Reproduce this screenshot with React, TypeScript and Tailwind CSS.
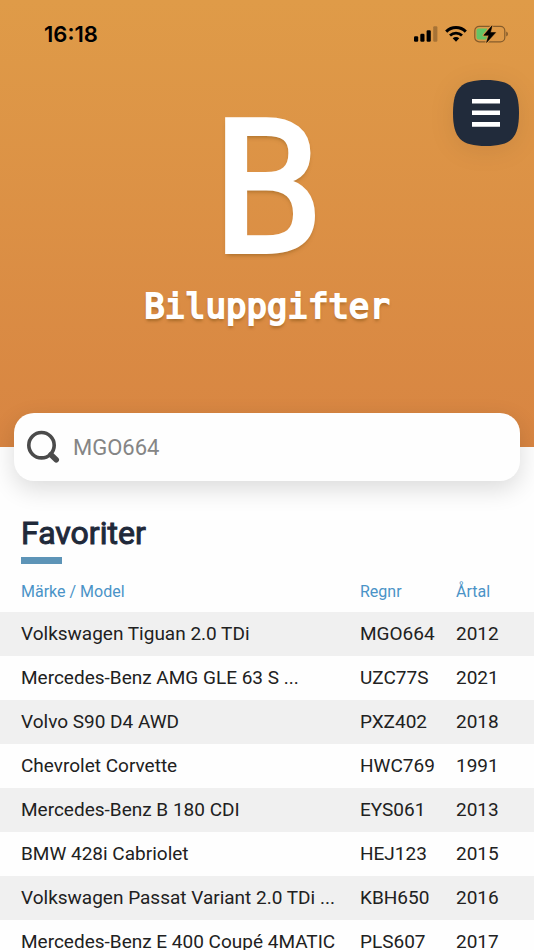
import React from "react";

type Car = { model: string; plate: string; year: number };

const cars: Car[] = [
  { model: "Volkswagen Tiguan 2.0 TDi", plate: "MGO664", year: 2012 },
  { model: "Mercedes-Benz AMG GLE 63 S ...", plate: "UZC77S", year: 2021 },
  { model: "Volvo S90 D4 AWD", plate: "PXZ402", year: 2018 },
  { model: "Chevrolet Corvette", plate: "HWC769", year: 1991 },
  { model: "Mercedes-Benz B 180 CDI", plate: "EYS061", year: 2013 },
  { model: "BMW 428i Cabriolet", plate: "HEJ123", year: 2015 },
  { model: "Volkswagen Passat Variant 2.0 TDi ...", plate: "KBH650", year: 2016 },
  { model: "Mercedes-Benz E 400 Coupé 4MATIC", plate: "PLS607", year: 2017 },
];

function SignalIcon() {
  return (
    <svg width="24" height="16" viewBox="0 0 24 16" aria-hidden="true">
      <rect x="0" y="10.3" width="4.2" height="5.5" rx="1.2" />
      <rect x="6.3" y="7.8" width="4.2" height="8" rx="1.2" />
      <rect x="12.6" y="4.2" width="4.2" height="11.6" rx="1.2" />
      <rect x="19.2" y="0.2" width="4.2" height="15.6" rx="1.2" opacity="0.25" />
    </svg>
  );
}

function WifiIcon() {
  return (
    <svg width="22" height="16" viewBox="0 0 22 16" fill="none" aria-hidden="true">
      <path d="M1.2 5.6C6.7 0.2 15.3 0.2 20.8 5.6" stroke="#000" strokeWidth="3" />
      <path d="M5 9.5c3.4-3.2 8.6-3.2 12 0" stroke="#000" strokeWidth="2.8" />
      <path d="M7.7 12.3c1.9-1.7 4.7-1.7 6.6 0L11 15.8z" fill="#000" />
    </svg>
  );
}

function BatteryIcon() {
  return (
    <svg width="34" height="18" viewBox="0 0 34 18" aria-hidden="true">
      <rect x="0.8" y="1.4" width="30" height="15.4" rx="4.4" fill="none" stroke="#000" strokeOpacity="0.4" strokeWidth="1.2" />
      <path d="M32.3 6.5c2 .8 2 4.2 0 5z" fill="#000" fillOpacity="0.45" />
      <path d="M4.5 3.6H13v11H4.5c-1.1 0-2-.9-2-2v-7c0-1.1.9-2 2-2z" fill="#63c466" />
      <path d="M18 .8 9.8 10.3h5L12.6 17.4 21.6 7.6h-5.2z" fill="#000" stroke="#dd9847" strokeWidth="2.6" strokeLinejoin="round" />
      <path d="M18 .8 9.8 10.3h5L12.6 17.4 21.6 7.6h-5.2z" fill="#000" stroke="#000" strokeWidth="0.6" strokeLinejoin="round" />
    </svg>
  );
}

function MenuButton() {
  return (
    <button type="button" aria-label="Meny" className="absolute top-20 right-[15px] drop-shadow-[0_4px_12px_rgba(0,0,0,0.08)]">
      <svg width="66" height="66" viewBox="0 0 66 66" aria-hidden="true">
        <path d="M33 0C58 0 66 8 66 33S58 66 33 66 0 58 0 33 8 0 33 0z" fill="#212b3b" />
        <path d="M19 21.2h28M19 32.8h28M19 44.4h28" stroke="#fff" strokeWidth="4.6" />
      </svg>
    </button>
  );
}

export default function App() {
  return (
    <div className="h-screen overflow-hidden bg-[#fefefe] font-['Roboto',sans-serif] text-[#212121]">
      <header className="relative h-[447px] bg-linear-to-b from-[#df9b48] to-[#d88542]">
        <div className="flex h-[68px] items-center justify-between pr-[26px] pl-11">
          <time className="font-['Inter',sans-serif] text-[22px] font-semibold text-black">16:18</time>
          <div className="flex items-center gap-[7px]">
            <SignalIcon />
            <WifiIcon />
            <BatteryIcon />
          </div>
        </div>
        <MenuButton />
        <div className="flex flex-col items-center pt-7 font-['DejaVu_Sans_Mono',monospace] text-white">
          <span aria-hidden="true" className="text-[181px] leading-[188px] [-webkit-text-stroke:4px_#fff] [text-shadow:0_3px_4px_rgba(110,70,10,0.5)]">B</span>
          <h1 className="text-[34px] leading-[44px] [-webkit-text-stroke:2px_#fff] [text-shadow:0_3px_3px_rgba(110,70,10,0.5)]">Biluppgifter</h1>
        </div>
      </header>

      <form role="search" onSubmit={(e: React.FormEvent) => e.preventDefault()} className="relative mx-[14px] -mt-[34px] flex h-[68px] items-center gap-[13px] rounded-[20px] bg-[#fefefe] pr-4 pl-3 shadow-[0_8px_24px_rgba(0,0,0,0.14)]">
        <label htmlFor="regnr" aria-label="Sök">
          <svg width="34" height="34" viewBox="0 0 34 34" fill="none" stroke="#4b4b4b" aria-hidden="true">
            <circle cx="15.5" cy="15.2" r="12.7" strokeWidth="3.6" />
            <path d="m25 24.8 5.2 5" strokeWidth="5.6" strokeLinecap="round" />
          </svg>
        </label>
        <input id="regnr" type="text" placeholder="MGO664" className="min-w-0 flex-1 bg-transparent text-[22px] outline-none placeholder:text-[#858585]" />
      </form>

      <main className="pt-8">
        <div className="px-[21px]">
          <h2 className="text-[32px] leading-10 font-normal text-[#1f293a] [-webkit-text-stroke:1px_#1f293a]">Favoriter</h2>
          <div className="mt-1 h-[7px] w-[41px] bg-[#5d94b7]" />
        </div>
        <table className="mt-2 w-full table-fixed border-collapse text-left">
          <colgroup>
            <col />
            <col className="w-24" />
            <col className="w-[78px]" />
          </colgroup>
          <thead>
            <tr className="h-10 text-[16px] text-[#4a93c7]">
              <th scope="col" className="pl-[21px] font-normal">Märke / Model</th>
              <th scope="col" className="font-normal">Regnr</th>
              <th scope="col" className="font-normal">Årtal</th>
            </tr>
          </thead>
          <tbody>
            {cars.map((car) => (
              <tr key={car.plate} className="h-11 text-[19px] odd:bg-[#f0f0f0]">
                <td className="truncate pl-[21px]">{car.model}</td>
                <td>{car.plate}</td>
                <td>{car.year}</td>
              </tr>
            ))}
          </tbody>
        </table>
      </main>
    </div>
  );
}
